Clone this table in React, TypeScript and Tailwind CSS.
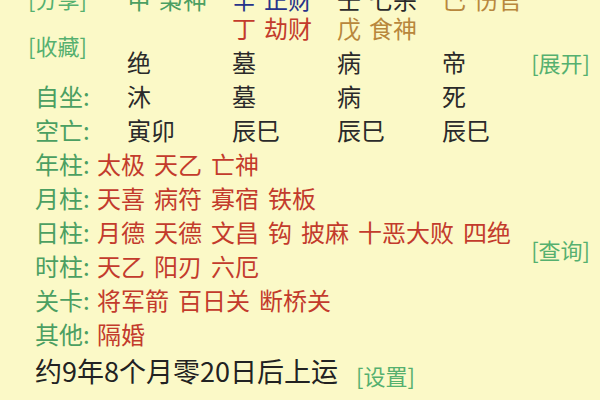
const green = "text-[#4b9f62]"
const link = "text-[#55b06f] text-[22px]"
const red = "text-[#c33b2c]"

type Stem = { text: string; color: string }

const stemRow1: Stem[] = [
  { text: "甲 枭神", color: "text-[#4b9f62]" },
  { text: "辛 正财", color: "text-[#27338a]" },
  { text: "壬 七杀", color: "text-[#2a2a2a]" },
  { text: "己 伤官", color: "text-[#b8873c]" },
]

const stemRow2: Stem[] = [
  { text: "", color: "" },
  { text: "丁 劫财", color: "text-[#c33b2c]" },
  { text: "戊 食神", color: "text-[#b8873c]" },
  { text: "", color: "" },
]

const shensha: { label: string; items: string[] }[] = [
  { label: "年柱", items: ["太极", "天乙", "亡神"] },
  { label: "月柱", items: ["天喜", "病符", "寡宿", "铁板"] },
]

const shensha2: { label: string; items: string[] }[] = [
  { label: "日柱", items: ["月德", "天德", "文昌", "钩", "披麻", "十恶大败", "四绝"] },
  { label: "时柱", items: ["天乙", "阳刃", "六厄"] },
]

const shensha3: { label: string; items: string[] }[] = [
  { label: "关卡", items: ["将军箭", "百日关", "断桥关"] },
  { label: "其他", items: ["隔婚"] },
]

function Words({ text }: { text: string }) {
  return (
    <span className="flex gap-x-[8px]">
      {text.split(" ").map((w, i) => (
        <span key={i}>{w}</span>
      ))}
    </span>
  )
}

function ShenshaRow({ label, items }: { label: string; items: string[] }) {
  return (
    <div className="flex h-[34px] items-center">
      <span className={`w-[62px] shrink-0 ${green}`}>{label}:</span>
      <span className={`flex gap-x-[9px] whitespace-nowrap ${red}`}>
        {items.map((w) => (
          <span key={w}>{w}</span>
        ))}
      </span>
    </div>
  )
}

export default function App() {
  return (
    <div className="w-[600px] h-[400px] overflow-hidden bg-[#fbf9c7] text-[24px] text-[#2a2a2a] font-['Noto_Sans_CJK_SC',sans-serif]">
      <div className="-mt-[14px] pl-[35px] pr-[10px]">
        {/* 藏干 */}
        <div className="flex">
          <div className="w-[92px] shrink-0 flex flex-col leading-[25px]">
            <span className={`-ml-[7px] ${link}`}>[分享]</span>
            <span className={`-ml-[7px] mt-[22px] ${link}`}>[收藏]</span>
          </div>
          <div className="flex-1">
            <div className="grid grid-cols-[105px_105px_105px_105px] gap-y-[4px] leading-[25px]">
              {stemRow1.map((s, i) => (
                <div key={"a" + i} className={s.color}>
                  <Words text={s.text} />
                </div>
              ))}
              {stemRow2.map((s, i) => (
                <div key={"b" + i} className={`h-[25px] ${s.color}`}>
                  {s.text && <Words text={s.text} />}
                </div>
              ))}
            </div>
            <div className="mt-[5px] flex h-[34px] items-center">
              <span className="w-[105px]">绝</span>
              <span className="w-[105px]">墓</span>
              <span className="w-[105px]">病</span>
              <span className="flex-1">帝</span>
              <span className={link}>[展开]</span>
            </div>
          </div>
        </div>

        {/* 自坐 / 空亡 */}
        <div className="grid grid-cols-[92px_105px_105px_105px_105px] auto-rows-[34px] items-center">
          <span className={green}>自坐:</span>
          <span>沐</span>
          <span>墓</span>
          <span>病</span>
          <span>死</span>
          <span className={green}>空亡:</span>
          <span>寅卯</span>
          <span>辰巳</span>
          <span>辰巳</span>
          <span>辰巳</span>
        </div>

        {/* 神煞 */}
        {shensha.map((r) => (
          <ShenshaRow key={r.label} {...r} />
        ))}
        <div className="flex items-center">
          <div className="flex-1">
            {shensha2.map((r) => (
              <ShenshaRow key={r.label} {...r} />
            ))}
          </div>
          <span className={link}>[查询]</span>
        </div>
        {shensha3.map((r) => (
          <ShenshaRow key={r.label} {...r} />
        ))}

        <div className="flex h-[40px] items-center">
          <span className="text-[27px] text-[#222]">约9年8个月零20日后上运</span>
          <span className={`ml-[18px] pt-[8px] ${link}`}>[设置]</span>
        </div>
      </div>
    </div>
  )
}
